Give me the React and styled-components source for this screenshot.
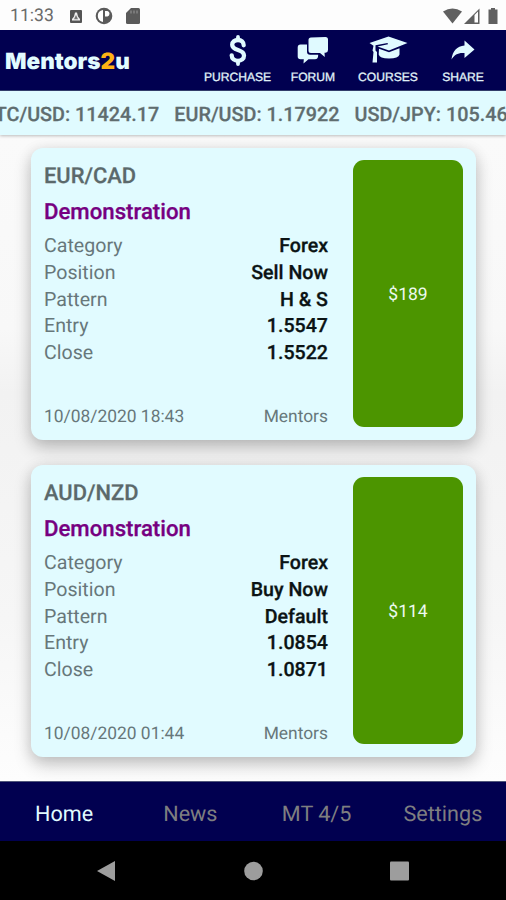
import React from "react";
import styled, { createGlobalStyle } from "styled-components";

const Global = createGlobalStyle`
  * { box-sizing: border-box; }
  body {
    margin: 0;
    overflow: hidden;
    font-family: Roboto, sans-serif;
    background: #fafafa;
    text-rendering: geometricPrecision;
  }
`;

const Screen = styled.div`
  width: 506px;
  height: 900px;
  display: flex;
  flex-direction: column;
  overflow: hidden;
`;

const StatusBar = styled.div`
  height: 30px;
  flex: none;
  display: flex;
  align-items: center;
  justify-content: space-between;
  padding: 2px 7px 0 10px;
  background: #fdfdfd;
  color: #6b6b6b;
`;

const Clock = styled.span`
  width: 60px;
  font-size: 17.6px;
`;

const StatusGroup = styled.div`
  display: flex;
  align-items: center;
  gap: ${(p) => p.$gap || 0}px;
`;

const Header = styled.header`
  height: 61px;
  flex: none;
  display: flex;
  background: #010050;
  border-bottom: 1px solid #34406f;
`;

const Logo = styled.div`
  width: 196px;
  padding: 20px 0 0 5px;
  font-family: Inter, sans-serif;
  font-weight: 900;
  font-size: 22.5px;
  line-height: 24px;
  color: #e2fbff;
`;

const LogoAccent = styled.span`
  color: #fcb315;
`;

const Action = styled.div`
  width: ${(p) => p.$w}px;
  display: flex;
  flex-direction: column;
  align-items: center;
`;

const ActionIcon = styled.div`
  height: 40px;
  display: flex;
  align-items: center;
  color: #e0faff;
  svg { display: block; }
`;

const ActionLabel = styled.span`
  font-family: "Liberation Sans", sans-serif;
  font-size: 12.1px;
  line-height: 14px;
  color: #e0f2f8;
  -webkit-text-stroke: 0.3px #e0f2f8;
  white-space: nowrap;
`;

const Ticker = styled.div`
  height: 44px;
  flex: none;
  display: flex;
  align-items: center;
  background: #e0fbff;
  color: #5f6d6f;
  font-weight: 500;
  font-size: 19.8px;
  -webkit-text-stroke: 0.25px #5f6d6f;
  white-space: pre;
  padding-top: 3px;
  box-shadow: 0 1px 3px rgba(0, 0, 0, 0.25);
  z-index: 1;
`;

const Quote = styled.span`
  flex: none;
  margin-left: ${(p) => p.$offset}px;
`;

const Feed = styled.main`
  height: 646px;
  flex: none;
  padding: 13px 30px 0 31px;
  display: flex;
  flex-direction: column;
  gap: 25px;
  overflow: hidden;
  background: linear-gradient(#fafafa 0%, #f8f8f8 30%, #f2f2f2 40%, #f6f6f6 75%, #fdfdfd 100%);
  border-bottom: 1px solid #fff;
`;

const Card = styled.article`
  height: 292px;
  flex: none;
  display: flex;
  justify-content: space-between;
  padding: 12px 13px 13px 13px;
  border-radius: 12px;
  background: #e1fbff;
  box-shadow: 0 8px 18px rgba(0, 0, 0, 0.2), 0 2px 14px rgba(0, 0, 0, 0.1);
`;

const Details = styled.div`
  width: 284px;
  display: flex;
  flex-direction: column;
`;

const Pair = styled.h2`
  margin: 0;
  padding-top: 2px;
  height: 34px;
  line-height: 29px;
  font-weight: 500;
  font-size: 21.9px;
  color: #5b696b;
  -webkit-text-stroke: 0.25px #5b696b;
`;

const Kind = styled.h3`
  margin: 0;
  height: 38.4px;
  line-height: 36px;
  font-weight: 500;
  font-size: 22.2px;
  color: #760081;
  -webkit-text-stroke: 0.3px #760081;
`;

const Row = styled.div`
  height: 26.7px;
  display: flex;
  justify-content: space-between;
  align-items: center;
  font-size: 19.6px;
  color: #67777a;
`;

const Value = styled.span`
  font-weight: 500;
  color: #0b1314;
  -webkit-text-stroke: 0.3px #0b1314;
`;

const Footer = styled.div`
  margin-top: auto;
  height: 20px;
  display: flex;
  justify-content: space-between;
  align-items: center;
  font-size: 17.4px;
  color: #67777a;
`;

const Price = styled.div`
  width: 110px;
  border-radius: 11px;
  display: flex;
  align-items: center;
  justify-content: center;
  padding-top: 2px;
  background: #4c9500;
  color: #edfaf0;
  font-size: 17.5px;
`;

const Tabs = styled.nav`
  height: 60px;
  flex: none;
  display: grid;
  grid-template-columns: repeat(4, 1fr);
  align-items: center;
  justify-items: center;
  padding: 5px 0 0 1px;
  background: #010050;
  border-top: 1px solid #50577a;
`;

const Tab = styled.span`
  font-size: 21.6px;
  color: ${(p) => (p.$active ? "#e0fbff" : "#7e7e80")};
`;

const NavBar = styled.div`
  height: 59px;
  flex: none;
  display: flex;
  justify-content: space-between;
  align-items: center;
  padding: 0 96px;
  background: #000;
`;

const trades = [
  { pair: "EUR/CAD", position: "Sell Now", pattern: "H & S", entry: "1.5547", close: "1.5522", date: "10/08/2020 18:43", price: "$189" },
  { pair: "AUD/NZD", position: "Buy Now", pattern: "Default", entry: "1.0854", close: "1.0871", date: "10/08/2020 01:44", price: "$114" },
];

const DollarIcon = () => (
  <svg width="18" height="31" viewBox="0 0 18 31" fill="none" stroke="currentColor" strokeLinecap="round">
    <path d="M14.700 10.300C14.700 6.800 12.300 5 9 5S3.200 6.700 3.200 9.800C3.200 16.500 15 13.500 15 20.500C15 24 12.400 25.800 9 25.800S2.700 24 2.700 20.300" strokeWidth="4.300" />
    <path d="M9 2V5M9 26v3" strokeWidth="3.800" />
  </svg>
);

const ForumIcon = () => (
  <svg width="32" height="27" viewBox="0 0 32 27" fill="currentColor">
    <path d="M14 0.500L28.500 0q2.500 0 2.500 2.500V13q0 2.500-2.500 2.800h-1l0.300 4.200-4.800-4H14q-2.500 0-2.500-2.500V3q0-2.500 2.500-2.500z" />
    <path d="M3.500 7.500h6.500v7q0 3.200 3 3.200h8.200q0 4.600-3.200 4.600h-6.500l-5 4.200 0.300-4.200h-3.300q-2.800 0-2.800-2.800V10.500q0-3 2.800-3z" />
  </svg>
);

const CapIcon = () => (
  <svg width="39" height="28" viewBox="0 0 39 28" fill="currentColor">
    <path d="M19.500 0.500L38.500 7 20 14.500 8.500 10.500 19 8.200 18.500 7 6.500 9.300V14.500L8 16v10.500H3.500L4.500 16 3.500 14.500 4.500 9.800 0.500 7z" />
    <path d="M10 12.800L20 16.300 30.500 12.300V18.500Q29.500 22.500 20 22.500T9.700 18.500z" />
  </svg>
);

const ShareIcon = () => (
  <svg width="24" height="20" viewBox="0 0 24 20" fill="currentColor">
    <path d="M13.500 0.500L23.500 9.500L13.500 18V13C7 12.500 3.500 14.500 0.500 19.500C1.500 11 6 6 13.500 5.500z" />
  </svg>
);

function Trade({ t }) {
  const rows = [["Category", "Forex"], ["Position", t.position], ["Pattern", t.pattern], ["Entry", t.entry], ["Close", t.close]];
  return (
    <Card>
      <Details>
        <Pair>{t.pair}</Pair>
        <Kind>Demonstration</Kind>
        {rows.map(([k, v]) => (
          <Row key={k}><span>{k}</span><Value>{v}</Value></Row>
        ))}
        <Footer><span>{t.date}</span><span>Mentors</span></Footer>
      </Details>
      <Price>{t.price}</Price>
    </Card>
  );
}

export default function App() {
  return (
    <Screen>
      <Global />
      <StatusBar>
        <StatusGroup>
          <Clock>11:33</Clock>
          <StatusGroup $gap={13}>
            <svg width="12" height="13" viewBox="0 0 12 13">
              <rect width="12" height="13" rx="1" fill="#555" />
              <path d="M5 2.500h2l1 4 2 2.500v1.500H2V9l2-2.500z" fill="#eee" />
              <path d="M4 9.300L6 5l2 4.300z" fill="#777" />
            </svg>
            <svg width="18" height="18" viewBox="0 0 18 18">
              <circle cx="9" cy="9" r="8.300" fill="#5a5a5a" />
              <path d="M8 3v12Q3 14 2.800 9T8 3z" fill="#fff" />
              <path d="M10 4h2.500q2 0.500 2 2.800t-2 2.800H10z" fill="#fff" />
            </svg>
            <svg width="14" height="16" viewBox="0 0 14 16">
              <path d="M5 0h7.500Q14 0 14 1.500v13q0 1.500-1.500 1.500h-11Q0 16 0 14.500V5z" fill="#5a5a5a" />
              <path d="M5 2.500v3M8 2.500v3M11 2.500v3" stroke="#999" />
            </svg>
          </StatusGroup>
        </StatusGroup>
        <svg width="56" height="18" viewBox="0 0 56 18">
          <path d="M0 4.500Q9.500-1.500 19 4.500L9.500 16.500z" fill="#606060" />
          <path d="M21 17L36.500 1.500V17z" fill="#606060" />
          <path d="M31.500 8l3.500-3.500v11h-3.500z" fill="#fff" />
          <path d="M45.500 2.500H48V1h4v1.500h2.500v14.500h-9z" fill="#606060" />
        </svg>
      </StatusBar>
      <Header>
        <Logo>Mentors<LogoAccent>2</LogoAccent>u</Logo>
        <Action $w={83}>
          <ActionIcon><DollarIcon /></ActionIcon>
          <ActionLabel>PURCHASE</ActionLabel>
        </Action>
        <Action $w={68}>
          <ActionIcon><ForumIcon /></ActionIcon>
          <ActionLabel>FORUM</ActionLabel>
        </Action>
        <Action $w={82}>
          <ActionIcon><CapIcon /></ActionIcon>
          <ActionLabel>COURSES</ActionLabel>
        </Action>
        <Action $w={68}>
          <ActionIcon><ShareIcon /></ActionIcon>
          <ActionLabel>SHARE</ActionLabel>
        </Action>
      </Header>
      <Ticker>
        <Quote $offset={-17.5}>BTC/USD: 11424.17</Quote>
        <Quote $offset={15}>EUR/USD: 1.17922</Quote>
        <Quote $offset={15}>USD/JPY: 105.46</Quote>
      </Ticker>
      <Feed>{trades.map((t) => <Trade key={t.pair} t={t} />)}</Feed>
      <Tabs>
        <Tab $active>Home</Tab>
        <Tab>News</Tab>
        <Tab>MT 4/5</Tab>
        <Tab>Settings</Tab>
      </Tabs>
      <NavBar>
        <svg width="20" height="22" viewBox="0 0 20 22"><path d="M1 11L19 1v20z" fill="#9d9d9d" /></svg>
        <svg width="20" height="20" viewBox="0 0 20 20"><circle cx="10.500" cy="10" r="9.300" fill="#9d9d9d" /></svg>
        <svg width="20" height="20" viewBox="0 0 20 20"><rect width="19" height="19" x="0" y="0.500" rx="1" fill="#9d9d9d" /></svg>
      </NavBar>
    </Screen>
  );
}
